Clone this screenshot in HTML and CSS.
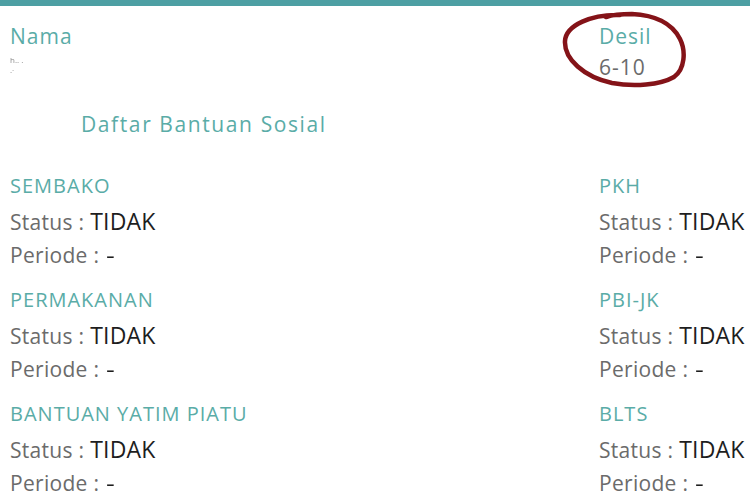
FILE: index.html
```html
<!DOCTYPE html>
<html lang="id">
<head>
<meta charset="utf-8">
<link rel="stylesheet" href="styles.css">
</head>
<body>
<div class="topbar"></div>
<div class="page">
  <div class="header">
    <div class="col-left">
      <div class="label">Nama</div>
      <div class="blur-name">h.. .<br>.·</div>
    </div>
    <div class="col-right desil">
      <div class="label">Desil</div>
      <div class="value">6-10</div>
      <svg class="circle" width="124" height="78" viewBox="0 0 124 78">
        <path d="M58 4 C30 3 4 14 3 30 C2 48 22 66 50 72 C72 76 98 74 112 66 C123 58 124 40 118 28 C110 12 92 4 70 3 C60 3 50 4 44 6" fill="none" stroke="#841318" stroke-width="4.5" stroke-linecap="round"/>
      </svg>
    </div>
  </div>
  <div class="section-title">Daftar Bantuan Sosial</div>
  <div class="grid">
    <div class="item">
      <div class="item-title">SEMBAKO</div>
      <div class="line">Status : <span class="val">TIDAK</span></div>
      <div class="line">Periode : <span class="dash">-</span></div>
    </div>
    <div class="item">
      <div class="item-title">PKH</div>
      <div class="line">Status : <span class="val">TIDAK</span></div>
      <div class="line">Periode : <span class="dash">-</span></div>
    </div>
    <div class="item">
      <div class="item-title">PERMAKANAN</div>
      <div class="line">Status : <span class="val">TIDAK</span></div>
      <div class="line">Periode : <span class="dash">-</span></div>
    </div>
    <div class="item">
      <div class="item-title">PBI-JK</div>
      <div class="line">Status : <span class="val">TIDAK</span></div>
      <div class="line">Periode : <span class="dash">-</span></div>
    </div>
    <div class="item">
      <div class="item-title">BANTUAN YATIM PIATU</div>
      <div class="line">Status : <span class="val">TIDAK</span></div>
      <div class="line">Periode : <span class="dash">-</span></div>
    </div>
    <div class="item">
      <div class="item-title">BLTS</div>
      <div class="line">Status : <span class="val">TIDAK</span></div>
      <div class="line">Periode : <span class="dash">-</span></div>
    </div>
  </div>
</div>
</body>
</html>
```
FILE: styles.css
```css
html, body {
  margin: 0;
  padding: 0;
  background: #ffffff;
  overflow: hidden;
  width: 750px;
  height: 500px;
}
body {
  font-family: "Open Sans", "Noto Sans", sans-serif;
  color: #666666;
}
.topbar {
  height: 6px;
  background: #4d9fa3;
}
.page {
  padding: 0 0 0 10px;
  overflow: hidden;
}
.header {
  display: grid;
  grid-template-columns: 589px 200px;
  padding-top: 17px;
}
.label {
  font-size: 21px;
  line-height: 26px;
  color: #5aaca7;
  letter-spacing: 1px;
}
.blur-name {
  font-size: 8px;
  line-height: 10px;
  color: #8a8a8a;
  margin-top: 6px;
  filter: blur(0.4px);
}
.desil {
  position: relative;
}
.desil .value {
  font-size: 21px;
  line-height: 28px;
  margin-top: 4px;
  color: #6b6b6b;
  letter-spacing: 1px;
}
.circle {
  position: absolute;
  left: -37px;
  top: -12px;
}
.section-title {
  margin: 30px 0 0 71px;
  font-size: 21px;
  line-height: 26px;
  color: #5aaca7;
  letter-spacing: 1.6px;
}
.grid {
  display: grid;
  grid-template-columns: 589px 200px;
  grid-auto-rows: 114px;
  margin-top: 38px;
}
.item-title {
  font-size: 20px;
  line-height: 24px;
  margin-top: -1px;
  color: #5aaca7;
  letter-spacing: 1px;
}
.line {
  font-size: 21px;
  line-height: 33px;
  color: #6b6b6b;
  white-space: nowrap;
  letter-spacing: 0.3px;
}
.line:nth-child(2) {
  margin-top: 7px;
}
.val {
  font-size: 23px;
  color: #1e1e1e;
  letter-spacing: 0.2px;
}
.dash {
  color: #1e1e1e;
  display: inline-block;
  transform: scaleX(1.3);
  margin-left: 2px;
}
```
